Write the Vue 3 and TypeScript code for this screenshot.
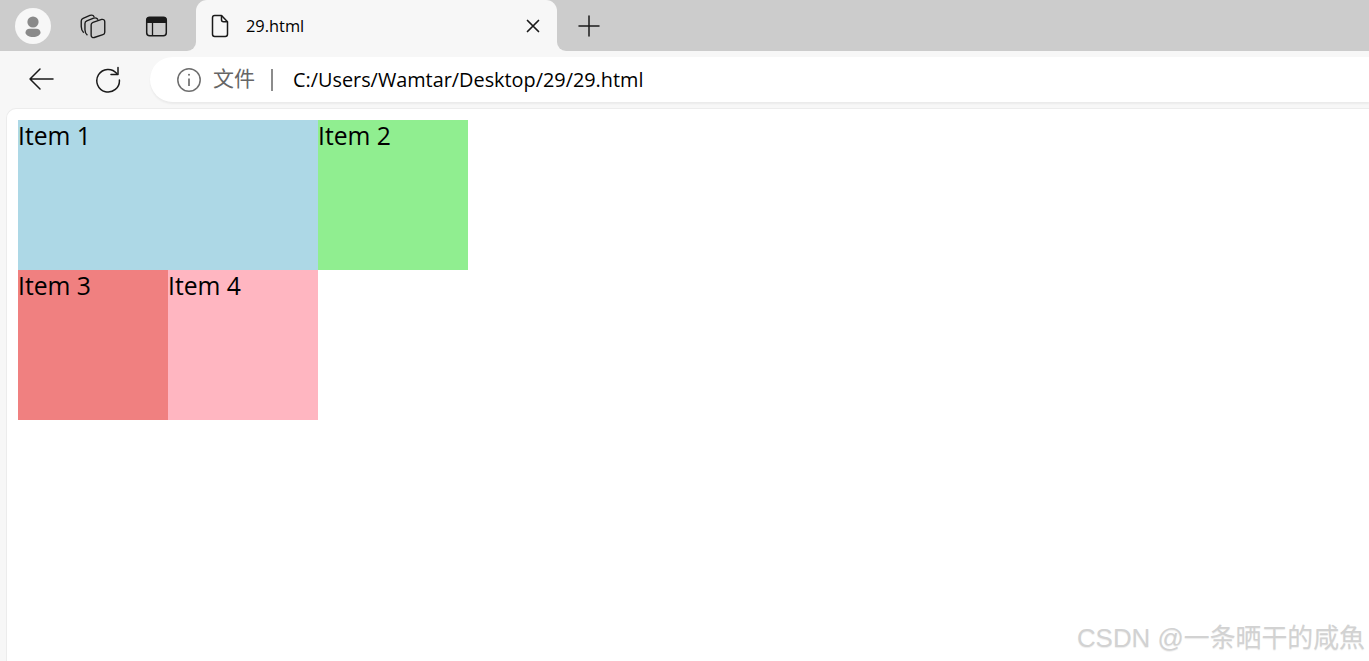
<script setup lang="ts">
const items = [
  { label: 'Item 1', cls: 'blue' },
  { label: 'Item 2', cls: 'green' },
  { label: 'Item 3', cls: 'coral' },
  { label: 'Item 4', cls: 'pink' },
]
</script>

<template>
  <div class="browser">
    <div class="strip">
      <div class="strip-left">
        <div class="avatar">
          <svg width="36" height="36" viewBox="0 0 36 36">
            <circle cx="18" cy="14" r="5.6" fill="#8a8a8a" />
            <path d="M10.5 24.5c0-2.3 1.8-3.7 4-3.7h7c2.2 0 4 1.4 4 3.7 0 2.6-3.4 4.5-7.5 4.500s-7.500-1.900-7.500-4.500z" fill="#8a8a8a" />
          </svg>
        </div>
        <svg class="workspaces" width="26" height="26" viewBox="2 3 21 21" fill="none" stroke="#1a1a1a" stroke-width="1.100" stroke-linejoin="round">
          <path d="M5 19c-1.200-1.200-2-3-2-5V9.500c0-1 .6-1.800 1.500-2.200l5.500-2.300c1.500-.6 3 .1 3.500 1.200" />
          <path d="M8 21c-1.200-1-2-2.600-2-4.500V11.500c0-1 .6-1.800 1.500-2.200l5.500-2.200c1.300-.5 3 .1 3.500 1.400" />
          <path d="M11 12.500c0-1 .6-1.700 1.500-2l7-2.300c1.300-.4 2.500.5 2.500 1.800v8.500c0 1-.6 1.700-1.500 2l-7 2.300c-1.300.4-2.500-.5-2.500-1.800z" />
        </svg>
        <svg class="sidebar" width="24" height="24" viewBox="0 0 24 24">
          <rect x="2.700" y="3.200" width="19.600" height="18.600" rx="3" fill="none" stroke="#1a1a1a" stroke-width="1.500" />
          <path d="M5.500 3h14a3 3 0 0 1 3 3v3H2.500V6a3 3 0 0 1 3-3z" fill="#1a1a1a" />
          <path d="M8.500 9v12.500" stroke="#1a1a1a" stroke-width="1.300" />
        </svg>
      </div>
      <div class="tab">
        <svg class="file" width="20" height="24" viewBox="0 0 20 24" fill="none" stroke="#1a1a1a" stroke-width="1.500" stroke-linejoin="round">
          <path d="M2.500 3.700c0-1.200.9-2.200 2.200-2.200h6.800l6 6.300v12.500c0 1.200-1 2.200-2.200 2.200H4.700c-1.300 0-2.200-1-2.200-2.200z" />
          <path d="M11.500 1.500v4.300c0 1.100.9 2 2 2h4" />
        </svg>
        <span class="tab-title">29.html</span>
        <svg class="close" width="14" height="14" viewBox="0 0 14 14" stroke="#1a1a1a" stroke-width="1.700" stroke-linecap="round">
          <path d="M1.500 1.500l11 11M12.500 1.500l-11 11" />
        </svg>
      </div>
      <div class="strip-right">
        <svg width="22" height="22" viewBox="0 0 22 22" stroke="#1a1a1a" stroke-width="1.500" stroke-linecap="round">
          <path d="M11 1v20M1 11h20" />
        </svg>
      </div>
    </div>

    <div class="toolbar">
      <svg class="back" width="26" height="24" viewBox="0 0 26 24" fill="none" stroke="#1a1a1a" stroke-width="1.500" stroke-linecap="round" stroke-linejoin="round">
        <path d="M25 12H2M12 2L2 12l10 10" />
      </svg>
      <svg class="reload" width="28" height="28" viewBox="0 0 28 28" fill="none" stroke="#1a1a1a" stroke-width="1.500" stroke-linecap="round" stroke-linejoin="round">
        <path d="M22.800 8.500A11.300 11.300 0 1 0 25.400 15" />
        <path d="M24 2.500v7h-7" />
      </svg>
      <div class="address">
        <svg class="info" width="26" height="26" viewBox="0 0 26 26" fill="none" stroke="#6e6e6e">
          <circle cx="13" cy="13" r="11.200" stroke-width="1.500" />
          <path d="M13 11.500v7.500" stroke-width="1.700" />
          <circle cx="13" cy="7.800" r="1" fill="#6e6e6e" stroke="none" />
        </svg>
        <span class="secure">文件</span>
        <span class="divider"></span>
        <span class="url">C:/Users/Wamtar/Desktop/29/29.html</span>
      </div>
    </div>

    <main class="page">
      <div class="grid">
        <div v-for="item in items" :key="item.label" class="item" :class="item.cls">{{ item.label }}</div>
      </div>
      <div class="watermark">CSDN @一条晒干的咸魚</div>
    </main>
  </div>
</template>

<style>
html,
body {
  margin: 0;
  overflow: hidden;
}
</style>

<style scoped>
.browser {
  width: 1369px;
  height: 661px;
  display: flex;
  flex-direction: column;
  background: #f7f7f7;
  font-family: "Open Sans", "Noto Sans CJK SC", sans-serif;
  color: #000;
  overflow: hidden;
}
.strip {
  height: 51px;
  display: flex;
  flex: none;
  background: linear-gradient(#ccc 50%, #f7f7f7 50%);
}
.strip-left {
  width: 196px;
  flex: none;
  background: #ccc;
  border-bottom-right-radius: 9px;
  display: flex;
  align-items: center;
  box-sizing: border-box;
  padding-left: 15px;
}
.avatar {
  width: 36px;
  height: 36px;
  border-radius: 50%;
  background: #f7f7f7;
}
.avatar svg {
  display: block;
}
.workspaces {
  margin-left: 29px;
}
.sidebar {
  margin-left: 38px;
}
.tab {
  width: 361px;
  flex: none;
  background: #f7f7f7;
  border-radius: 11px 11px 0 0;
  display: flex;
  align-items: center;
  box-sizing: border-box;
  padding-left: 14px;
}
.tab-title {
  margin-left: 16px;
  font-size: 16.400px;
}
.close {
  margin-left: auto;
  margin-right: 17px;
}
.strip-right {
  flex: 1;
  background: #ccc;
  border-bottom-left-radius: 9px;
  display: flex;
  align-items: center;
  padding-left: 21px;
}
.toolbar {
  height: 57px;
  flex: none;
  display: flex;
  align-items: flex-start;
  box-sizing: border-box;
  padding: 6px 0 0 28px;
}
.back {
  margin-top: 10px;
}
.reload {
  margin-left: 40px;
  margin-top: 8px;
}
.address {
  margin-left: 28px;
  flex: 1;
  height: 45px;
  background: #fff;
  border-radius: 23px 0 0 23px;
  box-shadow: 0 2px 2px rgba(0, 0, 0, 0.05);
  display: flex;
  align-items: center;
  padding-left: 26px;
}
.secure {
  margin-left: 11px;
  font-size: 21px;
  line-height: 24px;
  margin-top: -3px;
  color: #666;
}
.divider {
  width: 2px;
  height: 22px;
  margin-left: 16px;
  background: #8c8c8c;
}
.url {
  margin-left: 20px;
  font-size: 19.850px;
}
.page {
  position: relative;
  flex: 1;
  margin-left: 6px;
  background: #fff;
  border-top: 1px solid #ececec;
  border-left: 1px solid #ececec;
  border-top-left-radius: 10px;
  box-sizing: border-box;
  padding: 11px 0 0 11px;
}
.grid {
  display: grid;
  grid-template-columns: repeat(3, 150px);
  grid-auto-rows: 150px;
}
.item {
  font-size: 24.700px;
  line-height: 32px;
}
.blue {
  grid-column: span 2;
  background: #add8e6;
}
.green {
  background: #90ee90;
}
.coral {
  background: #f08080;
}
.pink {
  background: #ffb6c1;
}
.watermark {
  position: absolute;
  right: 4px;
  bottom: 7px;
  font-family: "Liberation Sans", "Noto Sans CJK SC", sans-serif;
  font-size: 25.900px;
  color: #d2d2d2;
  text-shadow: 0 1px 1px rgba(0, 0, 0, 0.08);
  white-space: nowrap;
}
</style>
